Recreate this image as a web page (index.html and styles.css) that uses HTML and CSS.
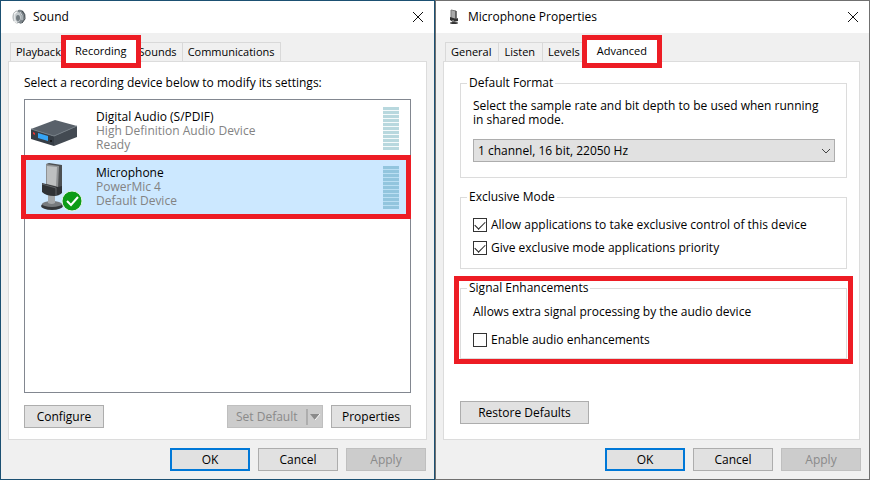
FILE: index.html
```
<!DOCTYPE html>
<html lang="en">
<head>
    <meta charset="UTF-8">
    <meta name="viewport" content="width=device-width, initial-scale=1.0">
    <title>Sound</title>
    <link rel="stylesheet" href="styles.css">
</head>
<body>
    <section class="dialog sound">
        <header class="titlebar">
            <svg class="title-icon" viewBox="0 0 16 16">
                <ellipse cx="6" cy="8" rx="4" ry="6" fill="#e2e5e6" stroke="#a5abae"/>
                <path d="M7 1q6-1 7 5 0 6-4 9l-4-2z" fill="#7d868b"/>
                <ellipse cx="7" cy="8" rx="3" ry="5" fill="#c3c9cc"/>
                <ellipse cx="7" cy="9" rx="2" ry="3" fill="#727b80"/>
                <path d="M11 2q4 3 3 8l-3 4" fill="none" stroke="#3d4449"/>
                <path d="M9 3q3 3 2 8" fill="none" stroke="#d5dadd"/>
                <path d="M3 5l3-2M3 12l3 2" stroke="#f5f5f5"/>
            </svg>
            <h1>Sound</h1>
            <button class="close" aria-label="Close">
                <svg viewBox="0 0 12 12"><path d="M1 1l10 10M11 1L1 11"/></svg>
            </button>
        </header>
        <nav class="tabs">
            <button class="tab">Playback</button>
            <button class="tab selected">Recording</button>
            <button class="tab">Sounds</button>
            <button class="tab">Communications</button>
        </nav>
        <main class="panel">
            <p>Select a recording device below to modify its settings:</p>
            <ul class="devices">
                <li class="device">
                    <svg class="device-icon" viewBox="0 0 48 48">
                        <path d="M1 24L25 15L47 21L24 31z" fill="#59616a"/>
                        <path d="M1 24L24 31V41L1 34z" fill="#363d45"/>
                        <path d="M24 31L47 21V32L24 41z" fill="#434a52"/>
                        <path d="M1 24L24 31L47 21" fill="none" stroke="#747d85"/>
                        <path d="M8 28L18 31V36L8 33z" fill="#36a5f5"/>
                        <path d="M3 27l2 1v2l-2-1z" fill="#e33"/>
                        <circle cx="21" cy="36" r="1" fill="#111"/>
                    </svg>
                    <div class="device-text">
                        <strong>Digital Audio (S/PDIF)</strong>
                        <span>High Definition Audio Device</span>
                        <span>Ready</span>
                    </div>
                    <div class="meter"></div>
                </li>
                <li class="device active marked">
                    <svg class="device-icon" viewBox="0 0 48 48">
                        <ellipse cx="22" cy="43" rx="11" ry="4" fill="#34373a"/>
                        <ellipse cx="22" cy="41" rx="10" ry="3" fill="#777b7e"/>
                        <path d="M18 31h7v9q-3 2-7 0z" fill="#a3a6a8"/>
                        <path d="M16 1l3-1 13 2v22l-4 3-12-3z" fill="#4d5052"/>
                        <path d="M16 1l13 2-1 23-12-3z" fill="#8f9294"/>
                        <path d="M17 3l10 1-1 19-9-2z" fill="#bdc0c1"/>
                        <path d="M12 20l16 4 4-1v7q-3 3-8 3-8 0-12-4z" fill="#303336"/>
                        <path d="M12 21l14 4v7" fill="none" stroke="#5e6265"/>
                        <circle cx="42" cy="38" r="10" fill="#0d9c16" stroke="#e4f3e5"/>
                        <path d="M37 38l4 4 7-8" fill="none" stroke="#fff" stroke-width="2"/>
                    </svg>
                    <div class="device-text">
                        <strong>Microphone</strong>
                        <span>PowerMic 4</span>
                        <span>Default Device</span>
                    </div>
                    <div class="meter"></div>
                </li>
            </ul>
            <div class="actions">
                <button class="btn">Configure</button>
                <button class="btn split" disabled>
                    Set Default
                    <svg viewBox="0 0 16 20"><path d="M1 2v16" stroke="#8f8f8f"/><path d="M4 7h10l-5 6z" fill="#8a8a8a"/><path d="M9 13l5-6" stroke="#fff"/></svg>
                </button>
                <button class="btn">Properties</button>
            </div>
        </main>
        <footer class="footer">
            <button class="btn default">OK</button>
            <button class="btn">Cancel</button>
            <button class="btn" disabled>Apply</button>
        </footer>
    </section>

    <section class="dialog properties">
        <header class="titlebar">
            <svg class="title-icon" viewBox="0 0 16 16">
                <path d="M5 1l5 1v8l-5-1z" fill="#aaa" stroke="#777"/>
                <path d="M10 2v8" stroke="#333"/>
                <path d="M4 8l6 2 2-1v3l-5 1-3-2z" fill="#333"/>
                <path d="M7 11v3" stroke="#777" stroke-width="2"/>
                <ellipse cx="8" cy="14" rx="4" ry="1" fill="#333"/>
            </svg>
            <h1>Microphone Properties</h1>
            <button class="close" aria-label="Close">
                <svg viewBox="0 0 12 12"><path d="M1 1l10 10M11 1L1 11"/></svg>
            </button>
        </header>
        <nav class="tabs">
            <button class="tab">General</button>
            <button class="tab">Listen</button>
            <button class="tab">Levels</button>
            <button class="tab selected">Advanced</button>
        </nav>
        <main class="panel">
            <fieldset class="format">
                <legend>Default Format</legend>
                <label for="format">Select the sample rate and bit depth to be used when running in shared mode.</label>
                <div class="select">
                    <select id="format">
                        <option>1 channel, 16 bit, 22050 Hz</option>
                    </select>
                    <svg viewBox="0 0 10 6"><path d="M1 1l4 4 4-4"/></svg>
                </div>
            </fieldset>
            <fieldset class="exclusive">
                <legend>Exclusive Mode</legend>
                <label class="check"><input type="checkbox" checked> Allow applications to take exclusive control of this device</label>
                <label class="check"><input type="checkbox" checked> Give exclusive mode applications priority</label>
            </fieldset>
            <fieldset class="signal marked">
                <legend>Signal Enhancements</legend>
                <p>Allows extra signal processing by the audio device</p>
                <label class="check"><input type="checkbox"> Enable audio enhancements</label>
            </fieldset>
            <button class="btn restore">Restore Defaults</button>
        </main>
        <footer class="footer">
            <button class="btn default">OK</button>
            <button class="btn">Cancel</button>
            <button class="btn" disabled>Apply</button>
        </footer>
    </section>
</body>
</html>
```
FILE: styles.css
```
* {
    box-sizing: border-box;
}

body {
    margin: 0;
    display: flex;
    min-height: 100vh;
    font-family: "Open Sans", "Noto Sans", sans-serif;
    font-size: 12px;
    line-height: 14px;
    color: #000;
}

h1, p, ul {
    margin: 0;
    padding: 0;
    font-size: 12px;
    font-weight: normal;
}

button, select {
    font: inherit;
    color: inherit;
}

.dialog {
    flex: 1;
    min-width: 0;
    display: flex;
    flex-direction: column;
    background-color: #f0f0f0;
    border: 1px solid #1b5072;
}

.properties {
    border-color: #707070;
}

.titlebar {
    display: flex;
    align-items: center;
    height: 32px;
    padding: 0 10px;
    background-color: #fff;
}

.title-icon {
    width: 16px;
    height: 16px;
    margin-right: 6px;
}

.titlebar h1 {
    flex: 1;
}

.close {
    display: flex;
    padding: 0;
    border: none;
    background: none;
}

.close svg {
    width: 12px;
    height: 12px;
    fill: none;
    stroke: #111;
}

/* tabs */
.tabs {
    display: flex;
    align-items: flex-end;
    height: 28px;
    padding-left: 9px;
}

.tab {
    height: 19px;
    padding: 0 7px 0 5px;
    font-size: 11px;
    background-color: #f0f0f0;
    border: 1px solid #d9d9d9;
    border-bottom: none;
    margin-right: -1px;
}

.tab.selected {
    position: relative;
    z-index: 1;
    height: 23px;
    margin: 0 -2px -2px 0;
    padding: 0 10px 2px;
    background-color: #fff;
    border: none;
}

.sound .tab {
    padding: 0 5px;
}

.sound .tab.selected {
    margin-right: -3px;
    padding: 0 9px 2px;
}

.tab.selected::after,
.marked::after {
    content: "";
    position: absolute;
    border: 5px solid #ed1c24;
    pointer-events: none;
}

.tab.selected::after {
    inset: -5px;
}

.panel {
    flex: 1;
    display: flex;
    flex-direction: column;
    margin: 0 7px;
    padding: 14px 15px 11px;
    background-color: #fff;
    border: 1px solid #dcdcdc;
}

/* device list */
.devices {
    flex: 1;
    margin-top: 9px;
    border: 1px solid #828790;
    list-style: none;
}

.device {
    display: flex;
    align-items: center;
    height: 57px;
    padding: 0 11px 0 5px;
}

.device.active {
    position: relative;
    height: 60px;
    background-color: #cce8ff;
}

.device.marked::after {
    inset: -2px -1px -2px -4px;
}

.device-icon {
    width: 48px;
    height: 48px;
    margin-right: 18px;
    overflow: visible;
}

.device-text {
    flex: 1;
    display: flex;
    flex-direction: column;
    color: #838383;
}

.device:first-child .device-text {
    padding-top: 4px;
}

.device-text strong {
    font-weight: normal;
    color: #000;
}

.meter {
    width: 16px;
    height: 43px;
    background: repeating-linear-gradient(#b8d8de 0 3px, #f4fafb 3px 4px);
}

.active .meter {
    background: repeating-linear-gradient(#92c5de 0 3px, #bbdff3 3px 4px);
}

/* buttons */
.btn {
    width: 80px;
    height: 23px;
    padding: 0;
    background-color: #e1e1e1;
    border: 1px solid #adadad;
}

.btn:disabled {
    background-color: #ccc;
    border-color: #bfbfbf;
    color: #8a8a8a;
}

.btn.default {
    border: 2px solid #0078d7;
}

.actions {
    display: flex;
    gap: 8px;
    margin-top: 12px;
}

.actions .btn:first-child {
    margin-right: auto;
}

.btn.split {
    display: flex;
    align-items: center;
    justify-content: space-between;
    width: 96px;
    padding-left: 8px;
}

.split svg {
    width: 16px;
    height: 20px;
}

.footer {
    display: flex;
    justify-content: flex-end;
    gap: 8px;
    padding: 8px;
}

/* microphone properties */
.properties .panel {
    margin-right: 9px;
    padding: 14px 12px 15px 16px;
}

fieldset {
    margin: 0 0 12px;
    padding: 0 11px 0 12px;
    border: 1px solid #dcdcdc;
}

legend {
    margin-left: -6px;
    padding: 0 2px;
}

.format {
    padding-top: 9px;
    padding-bottom: 15px;
}

.format label {
    display: block;
    padding-right: 8px;
}

.select {
    position: relative;
    margin-top: 12px;
}

.select select {
    display: block;
    width: 100%;
    height: 23px;
    padding: 0 4px;
    appearance: none;
    background-color: #e1e1e1;
    border: 1px solid #adadad;
    border-radius: 0;
}

.select svg {
    position: absolute;
    top: 9px;
    right: 4px;
    width: 10px;
    height: 6px;
    fill: none;
    stroke: #444;
    pointer-events: none;
}

.check {
    display: flex;
    align-items: center;
    gap: 4px;
}

.check input {
    appearance: none;
    width: 14px;
    height: 14px;
    margin: 0;
    background-color: #fff;
    border: 1px solid #333;
}

.check input:checked::after {
    content: "";
    display: block;
    width: 9px;
    height: 5px;
    margin: 2px 1px;
    border-left: 1px solid #222;
    border-bottom: 1px solid #222;
    transform: rotate(-45deg);
}

.exclusive {
    padding-top: 14px;
    padding-bottom: 13px;
}

.exclusive .check + .check {
    margin-top: 9px;
}

.signal {
    position: relative;
    padding-top: 10px;
    padding-bottom: 11px;
}

.signal .check {
    margin-top: 14px;
}

.signal.marked::after {
    inset: -19px -7px -6px;
}

.restore {
    width: 129px;
    margin-top: auto;
}
```
